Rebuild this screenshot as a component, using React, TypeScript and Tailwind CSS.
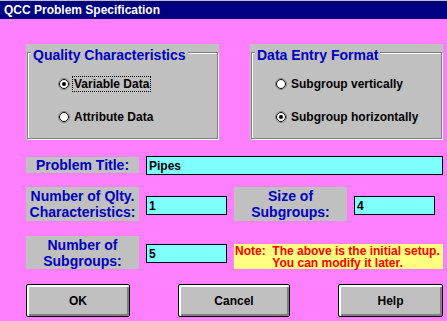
import React, { useState } from 'react';

// classic 3.1-style radio bullet
const Radio: React.FC<{ checked: boolean }> = ({ checked }) => (
  <svg width="12" height="12" viewBox="0 0 12 12" className="shrink-0">
    <circle cx="6" cy="6" r="5.5" fill="#ffffff" stroke="#808080" />
    <circle cx="6" cy="6" r="4.5" fill="#ffffff" stroke="#000000" />
    {checked && <circle cx="6" cy="6" r="2" fill="#000000" />}
  </svg>
);

interface GroupProps {
  title: string;
  options: string[];
  selected: number;
  focused?: boolean;
  padLeft: string;
  onSelect: (i: number) => void;
}

const GroupBox: React.FC<GroupProps> = ({ title, options, selected, focused, padLeft, onSelect }) => (
  <div className="relative w-[193px] h-[96px] bg-[#c0c0c0] pt-[8px] px-[1px] pb-[1px]">
    <div
      className={`h-full border border-[#808080] shadow-[inset_1px_1px_0_#ffffff,1px_1px_0_#ffffff] flex flex-col pt-[23px] gap-[17px] ${padLeft}`}
    >
      {options.map((opt, i) => (
        <div key={opt} className="flex items-center h-[16px] gap-[2px] cursor-default" onClick={() => onSelect(i)}>
          <Radio checked={selected === i} />
          <span
            className={`h-[16px] px-[1px] flex items-center border border-dotted ${
              focused && selected === i ? 'border-black' : 'border-transparent'
            } text-[12px] font-bold text-black leading-none`}
          >
            {opt}
          </span>
        </div>
      ))}
    </div>
    <span className="absolute top-[3px] left-[5px] px-[2px] bg-[#c0c0c0] text-[14px] leading-[16px] font-bold text-[#0000c0]">
      {title}
    </span>
  </div>
);

const FieldLabel: React.FC<{ children: React.ReactNode; h: string }> = ({ children, h }) => (
  <div
    className={`w-[113px] ${h} shrink-0 bg-[#c0c0c0] flex flex-col items-center justify-center text-center text-[14px] leading-[16px] font-bold text-[#0000c0]`}
  >
    {children}
  </div>
);

const Field: React.FC<{ value: string; w: string; mt?: string }> = ({ value, w, mt = '' }) => (
  <input
    type="text"
    defaultValue={value}
    className={`${w} h-[19px] ${mt} shrink-0 bg-[#80ffff] border border-black px-[2px] text-[12px] font-bold text-black outline-none`}
  />
);

const Button: React.FC<{ label: string; w: string }> = ({ label, w }) => (
  <button
    type="button"
    className={`${w} h-[33px] bg-[#c0c0c0] border border-black rounded-[2px] shadow-[inset_1px_1px_0_#ffffff,inset_2px_2px_0_#ffffff,inset_-1px_-1px_0_#808080,inset_-2px_-2px_0_#808080] text-[12px] font-bold text-black`}
  >
    {label}
  </button>
);

export default function App() {
  const [quality, setQuality] = useState(0);
  const [entry, setEntry] = useState(1);

  return (
    <div className="w-[447px] h-[321px] overflow-hidden bg-[#ff80ff] flex flex-col font-['Liberation_Sans',Arial,sans-serif]">
      <div className="h-[19px] shrink-0 bg-[#000080] border-t border-[#c0c0c0] flex items-center pl-[4px] text-[12px] font-bold text-white">
        QCC Problem Specification
      </div>

      <div className="flex flex-col pl-[26px] pr-[4px]">
        <div className="mt-[25px] flex justify-between">
          <GroupBox
            title="Quality Characteristics"
            options={['Variable Data', 'Attribute Data']}
            selected={quality}
            focused
            padLeft="pl-[30px]"
            onSelect={setQuality}
          />
          <GroupBox
            title="Data Entry Format"
            options={['Subgroup vertically', 'Subgroup horizontally']}
            selected={entry}
            padLeft="pl-[23px]"
            onSelect={setEntry}
          />
        </div>

        <div className="mt-[16px] h-[19px] flex items-start gap-[7px]">
          <div className="mt-[1px]">
            <FieldLabel h="h-[16px]">Problem Title:</FieldLabel>
          </div>
          <Field value="Pipes" w="w-[297px]" />
        </div>

        <div className="mt-[12px] h-[34px] flex items-start gap-[7px]">
          <FieldLabel h="h-[34px]">
            <span>Number of Qlty.</span>
            <span>Characteristics:</span>
          </FieldLabel>
          <Field value="1" w="w-[81px]" mt="mt-[9px]" />
          <FieldLabel h="h-[34px]">
            <span>Size of</span>
            <span>Subgroups:</span>
          </FieldLabel>
          <Field value="4" w="w-[81px]" mt="mt-[9px]" />
        </div>

        <div className="mt-[15px] h-[33px] flex items-start gap-[7px]">
          <FieldLabel h="h-[33px]">
            <span>Number of</span>
            <span>Subgroups:</span>
          </FieldLabel>
          <Field value="5" w="w-[81px]" mt="mt-[8px]" />
          <div className="mt-[8px] w-[209px] h-[25px] bg-[#ffff80] flex pl-[1px] pt-[1px] text-[12px] leading-[12px] font-bold text-[#ff0000]">
            <span className="whitespace-pre">Note:  </span>
            <div className="flex flex-col">
              <span>The above is the initial setup.</span>
              <span>You can modify it later.</span>
            </div>
          </div>
        </div>

        <div className="mt-[15px] flex justify-between">
          <Button label="OK" w="w-[104px]" />
          <Button label="Cancel" w="w-[112px]" />
          <Button label="Help" w="w-[105px]" />
        </div>
      </div>
    </div>
  );
}
